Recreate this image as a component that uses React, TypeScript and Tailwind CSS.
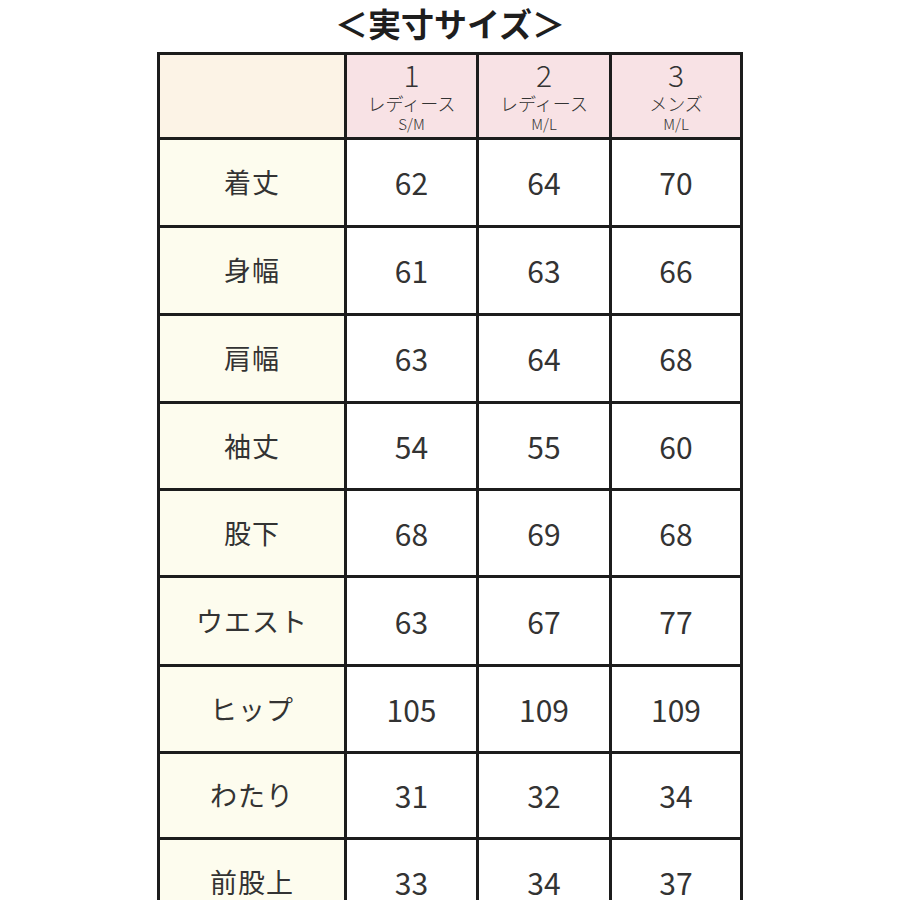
const headers = [
  { num: '1', label: 'レディース', size: 'S/M' },
  { num: '2', label: 'レディース', size: 'M/L' },
  { num: '3', label: 'メンズ', size: 'M/L' },
];

const rows: [string, string, string, string][] = [
  ['着丈', '62', '64', '70'],
  ['身幅', '61', '63', '66'],
  ['肩幅', '63', '64', '68'],
  ['袖丈', '54', '55', '60'],
  ['股下', '68', '69', '68'],
  ['ウエスト', '63', '67', '77'],
  ['ヒップ', '105', '109', '109'],
  ['わたり', '31', '32', '34'],
  ['前股上', '33', '34', '37'],
];

const font = { fontFamily: '"Noto Sans CJK JP", "Noto Sans", sans-serif' };

export default function App() {
  return (
    <div className="w-[900px] h-[900px] overflow-hidden bg-white text-[#2b2b2b]" style={font}>
      <div className="h-[52px] flex items-center justify-center pb-[5px]">
        <span className="text-[33px] font-bold text-[#1e1e1e] leading-none">＜実寸サイズ＞</span>
      </div>
      <div className="ml-[157px] w-[586px] grid grid-cols-[184px_129px_130px_128px] grid-rows-[82px_85px_85px_85px_84px_84px_86px_84px_83px_85px] gap-[3px] p-[3px] bg-[#1c1c1c]">
        <div className="bg-[#fcf3e6]" />
        {headers.map((h, i) => (
          <div key={i} className="bg-[#f8e2e5] flex flex-col items-center justify-start pt-[4px] text-[#333]">
            <span className="text-[30px] font-light leading-[30px]">{h.num}</span>
            <span className="text-[18px] font-light leading-[22px] mt-[3px]">{h.label}</span>
            <span className="text-[15px] font-light leading-[16px] mt-[2px]">{h.size}</span>
          </div>
        ))}
        {rows.map((r) => (
          <>
            <div key={r[0]} className="bg-[#fdfcee] flex items-center justify-center text-[27px] font-normal tracking-[1px] text-[#333]">
              {r[0]}
            </div>
            {r.slice(1).map((v, j) => (
              <div key={r[0] + j} className="bg-white flex items-center justify-center text-[30px] font-normal text-[#333]">
                {v}
              </div>
            ))}
          </>
        ))}
      </div>
    </div>
  );
}
